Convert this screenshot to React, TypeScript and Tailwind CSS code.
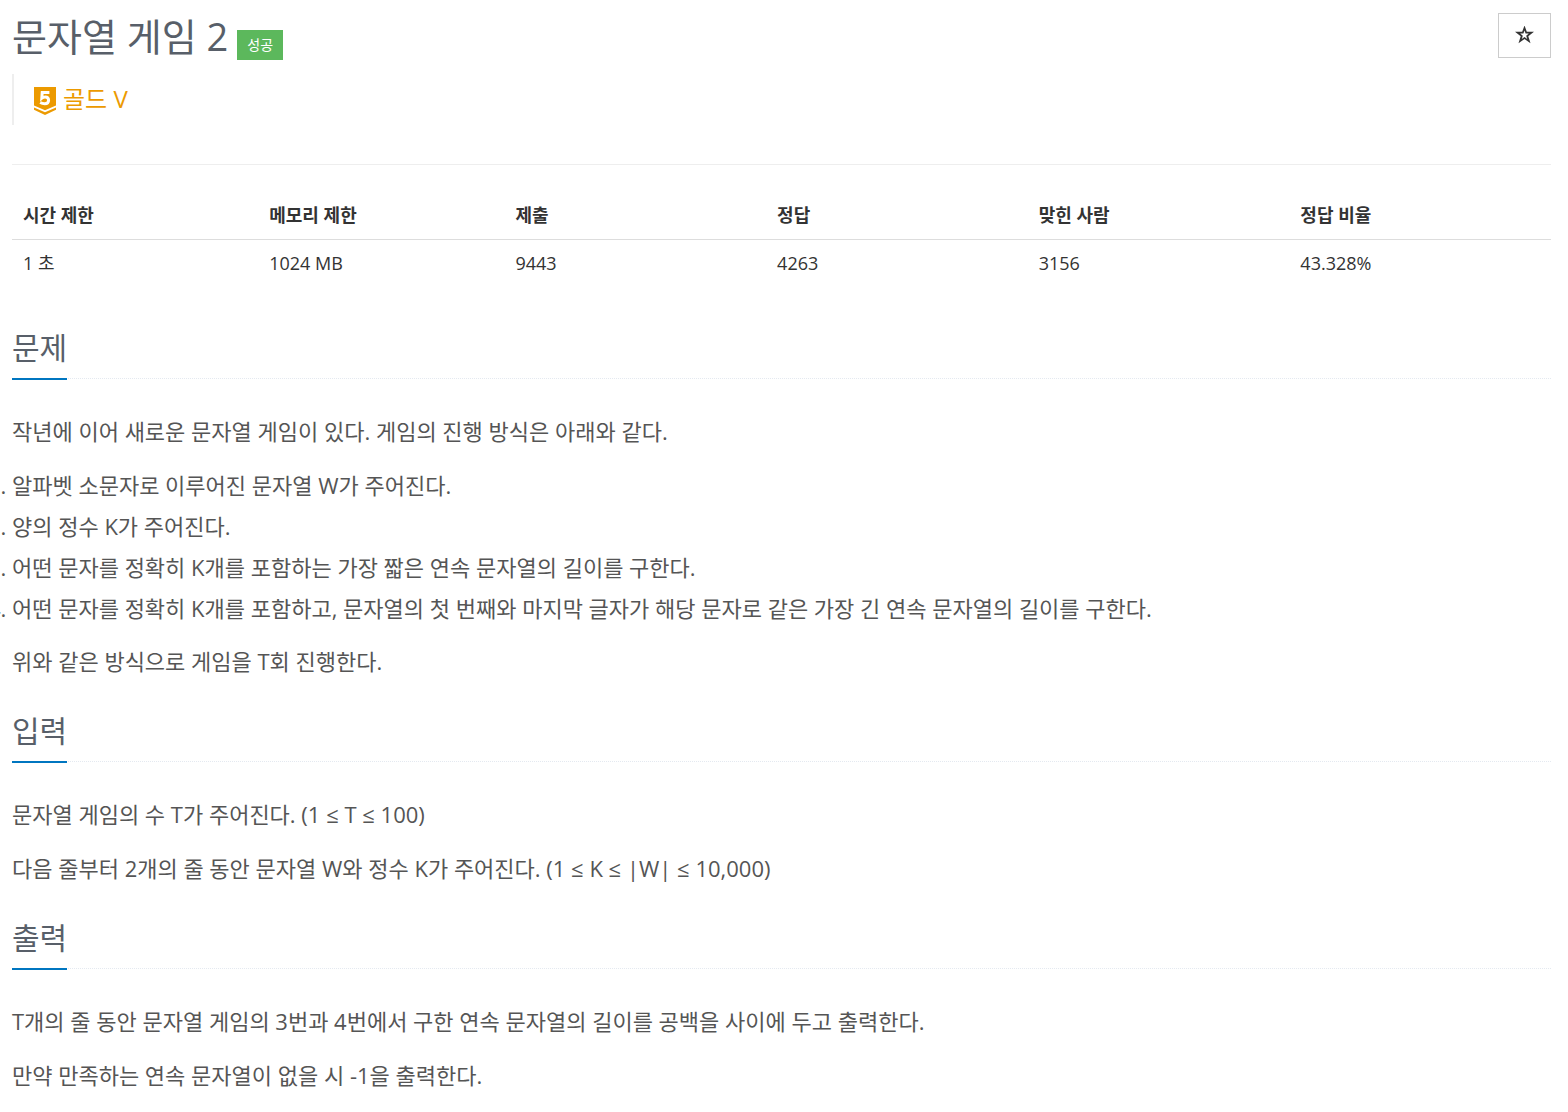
import type { ReactNode } from "react";

const stats = [
  { label: "시간 제한", value: "1 초", width: "w-[16%]" },
  { label: "메모리 제한", value: "1024 MB", width: "w-[16%]" },
  { label: "제출", value: "9443", width: "w-[17%]" },
  { label: "정답", value: "4263", width: "w-[17%]" },
  { label: "맞힌 사람", value: "3156", width: "w-[17%]" },
  { label: "정답 비율", value: "43.328%", width: "w-[17%]" },
];

const steps = [
  "알파벳 소문자로 이루어진 문자열 W가 주어진다.",
  "양의 정수 K가 주어진다.",
  "어떤 문자를 정확히 K개를 포함하는 가장 짧은 연속 문자열의 길이를 구한다.",
  "어떤 문자를 정확히 K개를 포함하고, 문자열의 첫 번째와 마지막 글자가 해당 문자로 같은 가장 긴 연속 문자열의 길이를 구한다.",
];

const TierIcon = () => (
  <svg viewBox="0 0 22 28" className="w-[22px] h-7" aria-hidden="true">
    <path d="M0 0H22V18.4L11 23.2L0 18.4Z" fill="#ec9a00" />
    <path d="M0 20.6L11 25.2L22 20.6V22.8L11 28L0 22.8Z" fill="#ec9a00" />
    <path
      d="M15.4 5.4H8.2L7.8 11.2C8.8 10.3 10 9.9 11.2 9.9C13.4 9.9 14.6 11.3 14.6 13.2C14.6 15.5 13.2 16.7 10.8 16.7C9 16.7 7.6 16.3 6.2 15.5"
      fill="none"
      stroke="#fff"
      strokeWidth="3"
    />
  </svg>
);

const StarIcon = () => (
  <svg viewBox="0 0 20 20" className="w-5 h-5" aria-hidden="true">
    <path
      fillRule="evenodd"
      fill="#333"
      d="M9.5 -0.5L11.8 5.7L19 5.8L13.3 10.2L15.5 17.2L9.5 13.1L3.5 17.2L5.7 10.2L0 5.8L7.2 5.7ZM9.5 4.4L8.4 7.5L5.2 7.6L7.8 9.7L6.8 13L9.5 11.1L12.2 13L11.2 9.7L13.8 7.6L10.6 7.5Z"
    />
  </svg>
);

interface SectionProps {
  title: string;
  children: ReactNode;
}

const Section = ({ title, children }: SectionProps) => (
  <section className="mb-7">
    <div className="flex border-b border-dotted border-[#e4e9f0] mb-8">
      <h2 className="-mb-0.5 pb-[9px] border-b-2 border-[#0076c0] text-[30px] leading-[42px] text-[#585f69]">
        {title}
      </h2>
    </div>
    <div className="text-[22px] leading-[41px] text-[#555]">{children}</div>
  </section>
);

const Paragraph = ({ children }: { children: ReactNode }) => (
  <p className="mb-[13px]">{children}</p>
);

export default function App() {
  return (
    <main className="overflow-hidden bg-white pl-3 pr-[17px] pt-3 font-['Open_Sans','Noto_Sans_CJK_KR',sans-serif] text-[#333]">
      <header className="flex items-start justify-between">
        <div className="flex items-end gap-[9px]">
          <h1 className="pb-1 text-[38px] leading-[48px] text-[#585f69]">
            문자열 게임 2
          </h1>
          <span className="mb-1 px-2.5 bg-[#5cb85c] text-white text-[14px] leading-[30px]">
            성공
          </span>
        </div>
        <button
          aria-label="즐겨찾기"
          className="mt-px flex h-[45px] w-[53px] items-center justify-center border border-[#ccc] bg-white"
        >
          <StarIcon />
        </button>
      </header>

      <blockquote className="mt-2.5 flex h-[51px] items-start gap-[7px] border-l-2 border-[#eee] pl-5 pt-[13px] text-[24px] leading-6 text-[#ec9a00]">
        <TierIcon />
        <span>골드 V</span>
      </blockquote>

      <hr className="mt-[39px] border-[#eee]" />

      <table className="mt-[27px] w-full table-fixed text-left text-[18px] leading-6">
        <thead>
          <tr className="border-b border-[#ddd]">
            {stats.map((s) => (
              <th
                key={s.label}
                className={`${s.width} px-[11px] pt-[11px] pb-3 font-bold`}
              >
                {s.label}
              </th>
            ))}
          </tr>
        </thead>
        <tbody>
          <tr>
            {stats.map((s) => (
              <td key={s.label} className="px-[11px] pt-[11px] pb-3">
                {s.value}
              </td>
            ))}
          </tr>
        </tbody>
      </table>

      <div className="mt-10">
        <Section title="문제">
          <Paragraph>
            작년에 이어 새로운 문자열 게임이 있다. 게임의 진행 방식은 아래와 같다.
          </Paragraph>
          <ol className="mb-3 list-decimal">
            {steps.map((step) => (
              <li key={step}>{step}</li>
            ))}
          </ol>
          <Paragraph>위와 같은 방식으로 게임을 T회 진행한다.</Paragraph>
        </Section>

        <Section title="입력">
          <Paragraph>문자열 게임의 수 T가 주어진다. (1 ≤ T ≤ 100)</Paragraph>
          <Paragraph>
            다음 줄부터 2개의 줄 동안 문자열 W와 정수 K가 주어진다. (1 ≤ K ≤ |W| ≤
            10,000)
          </Paragraph>
        </Section>

        <Section title="출력">
          <Paragraph>
            T개의 줄 동안 문자열 게임의 3번과 4번에서 구한 연속 문자열의 길이를
            공백을 사이에 두고 출력한다.
          </Paragraph>
          <Paragraph>만약 만족하는 연속 문자열이 없을 시 -1을 출력한다.</Paragraph>
        </Section>
      </div>
    </main>
  );
}
